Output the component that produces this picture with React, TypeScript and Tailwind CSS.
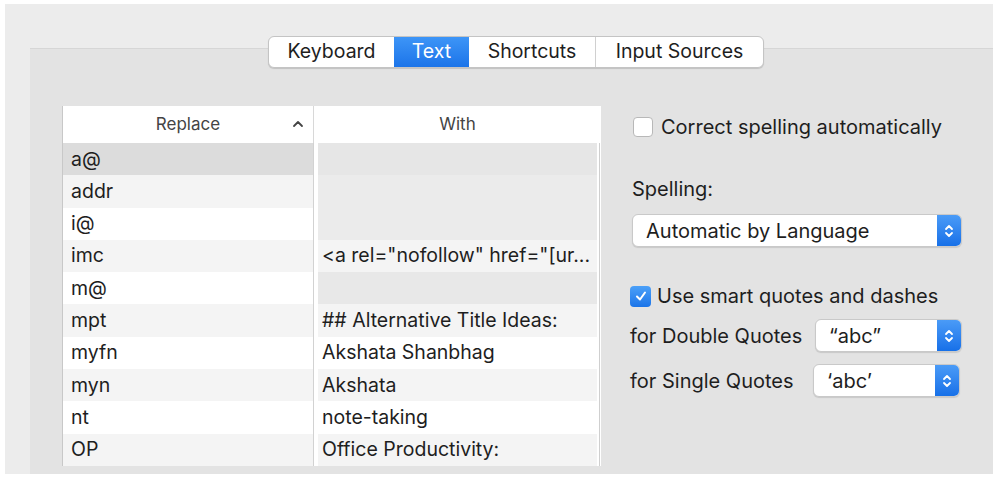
import React from 'react';

const font = { fontFamily: 'Inter, "Liberation Sans", sans-serif' };

const rows = [
  { key: 'a@', value: '', left: 'bg-[#dcdcdc]', right: 'bg-[#e6e6e6]' },
  { key: 'addr', value: '', left: 'bg-[#f4f4f4]', right: 'bg-[#ebebeb]' },
  { key: 'i@', value: '', left: 'bg-white', right: 'bg-[#ebebeb]' },
  { key: 'imc', value: '<a rel="nofollow" href="[ur...', left: 'bg-[#f4f4f4]', right: 'bg-[#f4f4f4]' },
  { key: 'm@', value: '', left: 'bg-white', right: 'bg-[#e8e8e8]' },
  { key: 'mpt', value: '## Alternative Title Ideas:', left: 'bg-[#f4f4f4]', right: 'bg-[#f4f4f4]' },
  { key: 'myfn', value: 'Akshata Shanbhag', left: 'bg-white', right: 'bg-white' },
  { key: 'myn', value: 'Akshata', left: 'bg-[#f4f4f4]', right: 'bg-[#f4f4f4]' },
  { key: 'nt', value: 'note-taking', left: 'bg-white', right: 'bg-white' },
  { key: 'OP', value: 'Office Productivity:', left: 'bg-[#f4f4f4]', right: 'bg-[#f4f4f4]' },
];

function Stepper() {
  return (
    <div className="w-[24px] self-stretch rounded-r-[5px] bg-gradient-to-b from-[#4a9bf7] to-[#1670e8] flex items-center justify-center">
      <svg width="10" height="16" viewBox="0 0 10 16" fill="none" stroke="white" strokeWidth="1.8" strokeLinecap="round" strokeLinejoin="round">
        <path d="M2 6 L5 3 L8 6" />
        <path d="M2 10 L5 13 L8 10" />
      </svg>
    </div>
  );
}

function Popup({ label, width }: { label: string; width: string }) {
  return (
    <div className={`${width} h-[33px] flex items-stretch bg-white rounded-[6px] border border-[#c9c9c9] shadow-[0_1px_1px_rgba(0,0,0,0.12)]`}>
      <span className="flex-1 flex items-center pl-[13px] text-[20px] text-[#1e1e1e]">{label}</span>
      <Stepper />
    </div>
  );
}

function Checkbox({ checked }: { checked?: boolean }) {
  if (checked) {
    return (
      <div className="w-[21px] h-[21px] rounded-[4px] bg-gradient-to-b from-[#4ba0f8] to-[#1a74e8] flex items-center justify-center">
        <svg width="14" height="14" viewBox="0 0 14 14" fill="none" stroke="white" strokeWidth="2" strokeLinecap="round" strokeLinejoin="round">
          <path d="M3 7.5 L6 10.5 L11 3.5" />
        </svg>
      </div>
    );
  }
  return <div className="w-[20px] h-[20px] rounded-[4px] bg-white border border-[#b8b8b8]" />;
}

export default function App() {
  return (
    <div className="w-[1000px] h-[482px] bg-white pt-[4px] pl-[5px] overflow-hidden" style={font}>
      <div className="w-[988px] h-[470px] bg-[#ececec] flex flex-col">
        {/* tab bar */}
        <div className="relative z-10 flex pl-[263px] pt-[32px] h-[66px]">
          <div className="flex h-[32px] rounded-[6px] border border-[#c4c4c4] bg-white shadow-[0_1px_1px_rgba(0,0,0,0.15)] text-[19.5px] text-[#1e1e1e]">
            <div className="w-[125px] flex items-center justify-center">Keyboard</div>
            <div className="w-[75px] flex items-center justify-center bg-gradient-to-b from-[#3d95f7] to-[#1b74e9] text-white">Text</div>
            <div className="w-[127px] flex items-center justify-center border-r border-[#d0d0d0]">Shortcuts</div>
            <div className="w-[167px] flex items-center justify-center">Input Sources</div>
          </div>
        </div>

        {/* inner panel */}
        <div className="-mt-[22px] ml-[25px] flex-1 bg-[#e3e3e3] border-t border-[#d6d6d6] flex pl-[32px] pt-[57px]">
          {/* table */}
          <div className="w-[539px] h-[360px] flex flex-col border-l border-[#c8c8c8] bg-white">
            <div className="h-[37px] flex bg-white text-[17px] text-[#444]">
              <div className="w-[251px] relative flex items-center justify-center border-r border-[#d8d8d8]">
                Replace
                <svg className="absolute right-[9px] top-[14px]" width="12" height="8" viewBox="0 0 12 8" fill="none" stroke="#444" strokeWidth="1.8" strokeLinecap="round" strokeLinejoin="round">
                  <path d="M2 6 L6 2 L10 6" />
                </svg>
              </div>
              <div className="flex-1 flex items-center justify-center">With</div>
            </div>
            {rows.map((r) => (
              <div key={r.key} className="h-[32.3px] flex text-[19.5px] text-[#1e1e1e]">
                <div className={`w-[251px] ${r.left} flex items-center pl-[8px] border-r border-[#d2d2d2]`}>{r.key}</div>
                <div className="w-[4px] bg-white" />
                <div className={`w-[279px] ${r.right} flex items-center pl-[4px] whitespace-nowrap overflow-hidden`}>{r.value}</div>
                <div className="w-[3px] bg-white border-r border-[#cfcfcf]" />
              </div>
            ))}
          </div>

          {/* options */}
          <div className="ml-[31px] flex flex-col text-[20px] text-[#1e1e1e]">
            <div className="flex items-center gap-[8px] mt-[6px] ml-[1px]">
              <Checkbox />
              <span>Correct spelling automatically</span>
            </div>
            <div className="mt-[32px]">Spelling:</div>
            <div className="mt-[10px]">
              <Popup label="Automatic by Language" width="w-[330px]" />
            </div>
            <div className="flex items-center gap-[6px] mt-[34px] -ml-[2px]">
              <Checkbox checked />
              <span>Use smart quotes and dashes</span>
            </div>
            <div className="flex items-center mt-[8px] h-[33px]">
              <span className="w-[185px] -ml-[2px]">for Double Quotes</span>
              <Popup label="“abc”" width="w-[147px]" />
            </div>
            <div className="flex items-center mt-[12px] h-[33px]">
              <span className="w-[183px] -ml-[2px]">for Single Quotes</span>
              <Popup label="‘abc’" width="w-[147px]" />
            </div>
          </div>
        </div>
      </div>
    </div>
  );
}
